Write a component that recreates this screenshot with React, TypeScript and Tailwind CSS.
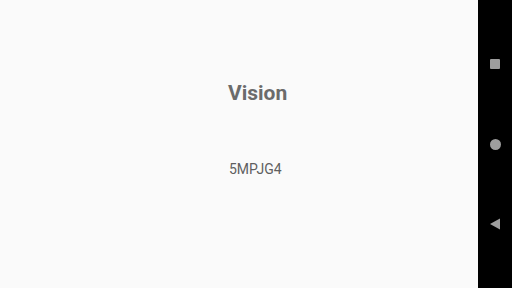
export default function App() {
  return (
    <div
      className="flex h-[288px] w-[512px] bg-[#fafafa]"
      style={{ fontFamily: "Roboto, 'Noto Sans', sans-serif" }}
    >
      <main className="flex flex-1 flex-col items-start pl-[228px] pt-[79px]">
        <h1 className="text-[21px] font-bold leading-[28px] text-[#6b6b6b]">Vision</h1>
        <p className="ml-[1px] mt-[52px] text-[14px] leading-[20px] text-[#5f5f5f]">5MPJG4</p>
      </main>
      <nav className="flex w-[34px] flex-col items-center bg-black pt-[59px]">
        <div className="h-[10px] w-[10px] rounded-[1px] bg-[#9e9e9e]" />
        <div className="mt-[70px] h-[11px] w-[11px] rounded-full bg-[#9e9e9e]" />
        <svg className="mt-[68px]" width="12" height="12" viewBox="0 0 12 12">
          <polygon points="11,0.5 11,11.5 1,6" fill="#9e9e9e" />
        </svg>
      </nav>
    </div>
  );
}
